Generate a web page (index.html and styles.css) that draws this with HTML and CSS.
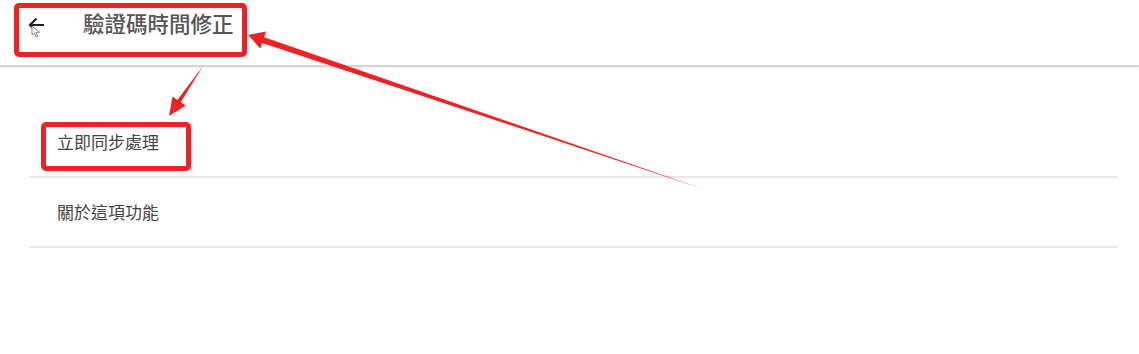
FILE: index.html
```html
<!DOCTYPE html>
<html>
<head>
    <meta charset="UTF-8">
    <title>驗證碼時間修正</title>
    <link rel="stylesheet" href="styles.css">
</head>
<body>

<div class="toolbar">
    <span class="back">
        <svg width="18" height="18" viewBox="0 0 18 18">
            <path d="M17 9H3M9.5 2.5L3 9L9.5 15.5" fill="none" stroke="#222" stroke-width="2.2"/>
        </svg>
        <svg class="pointer" width="10" height="13" viewBox="0 0 10 13">
            <path d="M1 1L1 10L3.5 8L5.5 12L7 11.3L5 7.5L8.5 7.2Z" fill="#fff" stroke="#888" stroke-width="1"/>
        </svg>
    </span>
    <span class="title">驗證碼時間修正</span>
</div>

<ul class="menu">
    <li>立即同步處理</li>
    <li>關於這項功能</li>
</ul>

<!-- annotation marks -->
<div class="mark mark-title"></div>
<div class="mark mark-sync"></div>
<svg class="arrows" width="1139" height="354" viewBox="0 0 1139 354">
    <polygon points="248,35 266,31.6 264.2,37.3 706,190 262.2,42.9 260.3,48.6" fill="#ee2222"/>
    <polygon points="169,116 172.5,96.6 177.4,100 203,66 180.8,102.2 185.7,105.6" fill="#ee2222"/>
</svg>

</body>
</html>
```

FILE: styles.css
```css
body {
    margin: 0;
    background: #fff;
    font-family: "Noto Sans CJK TC", "Noto Sans", sans-serif;
    position: relative;
    height: 354px;
    overflow: hidden;
}
.toolbar {
    height: 67px;
    display: flex;
    align-items: center;
    padding-left: 27px;
    padding-bottom: 20px;
    box-sizing: border-box;
    border-bottom: 2px solid #d6d6d6;
    box-shadow: 0 1px 2px rgba(0, 0, 0, 0.08);
}
.back {
    position: relative;
    width: 18px;
    height: 18px;
    margin-right: 38px;
    margin-top: 4px;
}
.back svg {
    display: block;
}
.back .pointer {
    position: absolute;
    left: 4px;
    top: 9px;
}
.title {
    font-size: 21.5px;
    color: #555;
    font-weight: 500;
}
.menu {
    list-style: none;
    margin: 41px 21px 0 30px;
    padding: 0;
}
.menu li {
    height: 68px;
    line-height: 67px;
    padding-left: 27px;
    font-size: 17px;
    color: #444;
    border-bottom: 2px solid #e8e8e8;
}
.mark {
    position: absolute;
    border: 5px solid #ee2222;
    border-radius: 5px;
    box-sizing: border-box;
}
.mark-title {
    left: 14px;
    top: 3px;
    width: 233px;
    height: 54px;
}
.mark-sync {
    left: 41px;
    top: 122px;
    width: 150px;
    height: 49px;
}
.arrows {
    position: absolute;
    left: 0;
    top: 0;
    pointer-events: none;
}
```
